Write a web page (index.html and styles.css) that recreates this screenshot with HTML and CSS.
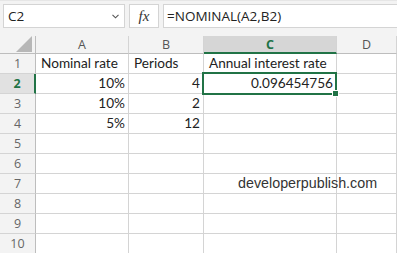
FILE: index.html
```html
<!DOCTYPE html>
<html>
<head>
    <meta charset="UTF-8">
    <title>NOMINAL function</title>
    <link rel="stylesheet" href="styles.css">
</head>
<body>
    <div class="toolbar">
        <div class="namebox">
            <span>C2</span>
            <svg class="chevron" width="7" height="5" viewBox="0 0 7 5"><path d="M0.5 0.8 L3.5 3.8 L6.5 0.8" fill="none" stroke="#555" stroke-width="1.1"/></svg>
        </div>
        <div class="fxbox"><span class="fx">fx</span></div>
        <div class="formula">=NOMINAL(A2,B2)</div>
    </div>

    <div class="sheet">
        <div class="corner"><svg width="16" height="16" viewBox="0 0 16 16"><path d="M16 0 L16 16 L0 16 Z" fill="#b7b7b7"/></svg></div>
        <div class="colhead">A</div>
        <div class="colhead">B</div>
        <div class="colhead active">C</div>
        <div class="colhead">D</div>

        <div class="rowhead">1</div>
        <div class="cell">Nominal rate</div>
        <div class="cell">Periods</div>
        <div class="cell">Annual interest rate</div>
        <div class="cell"></div>

        <div class="rowhead active">2</div>
        <div class="cell num">10%</div>
        <div class="cell num">4</div>
        <div class="cell num selected">0.096454756</div>
        <div class="cell"></div>

        <div class="rowhead">3</div>
        <div class="cell num">10%</div>
        <div class="cell num">2</div>
        <div class="cell"></div>
        <div class="cell"></div>

        <div class="rowhead">4</div>
        <div class="cell num">5%</div>
        <div class="cell num">12</div>
        <div class="cell"></div>
        <div class="cell"></div>

        <div class="rowhead">5</div>
        <div class="cell"></div><div class="cell"></div><div class="cell"></div><div class="cell"></div>

        <div class="rowhead">6</div>
        <div class="cell"></div><div class="cell"></div><div class="cell"></div><div class="cell"></div>

        <div class="rowhead">7</div>
        <div class="cell"></div><div class="cell"></div><div class="cell"></div><div class="cell"></div>

        <div class="rowhead">8</div>
        <div class="cell"></div><div class="cell"></div><div class="cell"></div><div class="cell"></div>

        <div class="rowhead">9</div>
        <div class="cell"></div><div class="cell"></div><div class="cell"></div><div class="cell"></div>

        <div class="rowhead">10</div>
        <div class="cell"></div><div class="cell"></div><div class="cell"></div><div class="cell"></div>

        <div class="watermark">developerpublish.com</div>
    </div>
</body>
</html>
```

FILE: styles.css
```css
* {
    box-sizing: border-box;
}
body {
    margin: 0;
    width: 397px;
    height: 253px;
    overflow: hidden;
    background: #fff;
    font-family: Lato, 'Open Sans', sans-serif;
}
.toolbar {
    height: 36px;
    background: #f3f3f3;
    border-top: 1px solid #e6e6e6;
    display: flex;
    align-items: flex-start;
    padding: 3px 0 0 3px;
    gap: 4px;
}
.namebox, .fxbox, .formula {
    height: 24px;
    background: #fff;
    border: 1px solid #d4d4d4;
    display: flex;
    align-items: center;
}
.namebox {
    width: 122px;
    padding: 0 4px 0 4px;
    justify-content: space-between;
    font-family: 'Open Sans', sans-serif;
    font-size: 13.5px;
    color: #222;
}
.chevron {
    margin-right: 1px;
}
.fxbox {
    width: 30px;
    justify-content: center;
}
.fx {
    font-family: 'Liberation Serif', serif;
    font-style: italic;
    font-size: 15px;
    color: #333;
}
.formula {
    flex: 1;
    border-right: none;
    padding-left: 3px;
    font-family: 'Open Sans', sans-serif;
    font-size: 13.5px;
    color: #222;
}
.sheet {
    position: relative;
    display: grid;
    grid-template-columns: 36px 93px 75px 133px 60px;
    grid-template-rows: 18px repeat(10, 20px);
}
.corner {
    background: #f3f3f3;
    border-right: 1px solid #bdbdbd;
    border-bottom: 1px solid #bdbdbd;
    display: flex;
    align-items: flex-end;
    justify-content: flex-end;
    padding: 0 3px 1px 0;
}
.colhead {
    background: #f3f3f3;
    border-right: 1px solid #d4d4d4;
    border-bottom: 1px solid #bdbdbd;
    text-align: center;
    font-family: 'Open Sans', sans-serif;
    font-size: 12.5px;
    line-height: 17px;
    color: #555;
}
.colhead.active {
    background: #d6d6d6;
    color: #217346;
    font-weight: bold;
    border-bottom: 2px solid #217346;
}
.rowhead {
    background: #f3f3f3;
    border-right: 1px solid #bdbdbd;
    border-bottom: 1px solid #d4d4d4;
    text-align: center;
    font-family: 'Open Sans', sans-serif;
    font-size: 12.5px;
    line-height: 19px;
    color: #666;
}
.rowhead.active {
    background: #e1e1e1;
    color: #217346;
    font-weight: bold;
    border-right: 2px solid #217346;
}
.cell {
    border-right: 1px solid #d4d4d4;
    border-bottom: 1px solid #d4d4d4;
    padding: 0 4px 0 5px;
    font-size: 13.6px;
    line-height: 19px;
    color: #222;
    white-space: nowrap;
}
.cell.num {
    text-align: right;
    padding-right: 3px;
}
.cell.selected {
    position: relative;
}
.cell.selected::after {
    content: "";
    position: absolute;
    left: -2px;
    top: -2px;
    right: -1px;
    bottom: -2px;
    border: 2px solid #217346;
}
.cell.selected::before {
    content: "";
    position: absolute;
    right: -3px;
    bottom: -4px;
    width: 5px;
    height: 5px;
    background: #217346;
    border: 1px solid #fff;
    z-index: 1;
}
.watermark {
    position: absolute;
    left: 238px;
    top: 139px;
    font-family: 'Liberation Sans', Arial, sans-serif;
    font-size: 14.3px;
    color: #333;
}
```
